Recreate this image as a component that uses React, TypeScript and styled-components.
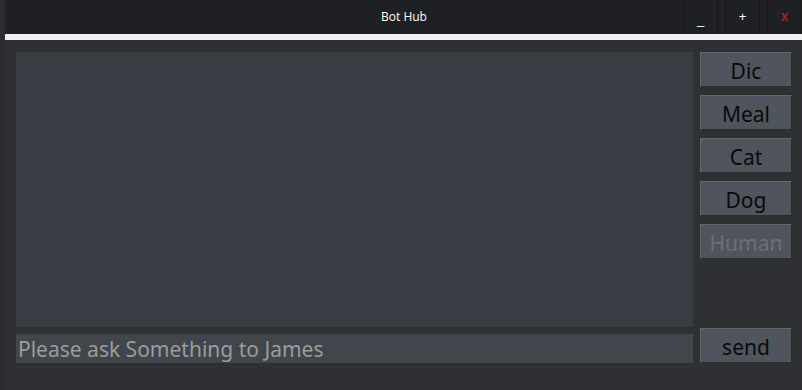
import React from "react";
import styled, { createGlobalStyle } from "styled-components";

const Global = createGlobalStyle`
  html, body { margin: 0; padding: 0; background: #2f3034; }
  body { font-family: "Noto Sans", "Open Sans", sans-serif; }
  * { box-sizing: border-box; }
`;

const Window = styled.div`
  display: flex;
  width: 802px;
  height: 390px;
  background: #2f3034;
  overflow: hidden;
`;

const EdgeStrip = styled.div`
  width: 5px;
  flex: none;
  background: #2b2c2f;
`;

const Main = styled.div`
  flex: 1;
  display: flex;
  flex-direction: column;
`;

const TitleBar = styled.div`
  height: 34px;
  display: flex;
  background: #1f2024;
`;

const Title = styled.div`
  flex: 1;
  padding-left: 120px;
  display: flex;
  align-items: center;
  justify-content: center;
  color: #ffffff;
  font-family: "Open Sans", "Noto Sans", sans-serif;
  font-size: 12px;
  padding-bottom: 1px;
`;

const WinButtons = styled.div`
  display: flex;
  gap: 7px;
  height: 33px;
`;

const WinButton = styled.div<{ $danger?: boolean; $low?: boolean }>`
  width: 35px;
  height: 33px;
  display: flex;
  align-items: ${(p) => (p.$low ? "flex-end" : "center")};
  justify-content: center;
  padding-bottom: ${(p) => (p.$low ? "7px" : "1px")};
  border-left: 1px solid #17181a;
  border-right: 1px solid #17181a;
  color: ${(p) => (p.$danger ? "#d41a1a" : "#ffffff")};
  font-family: "Liberation Sans", sans-serif;
  font-size: ${(p) => (p.$danger ? "14px" : "13px")};
  line-height: 1;
`;

const WhiteStrip = styled.div`
  height: 6px;
  background: #f0f0f0;
`;

const Content = styled.div`
  display: flex;
  gap: 7px;
  padding: 12px 0 0 11px;
`;

const LeftCol = styled.div`
  display: flex;
  flex-direction: column;
  gap: 7px;
  width: 677px;
`;

const ChatArea = styled.div`
  height: 275px;
  background: #393c43;
`;

const Input = styled.input`
  height: 29px;
  border: none;
  outline: none;
  background: #41454c;
  color: #9b9b9b;
  font-family: "Noto Sans", sans-serif;
  font-size: 21px;
  padding: 1px 0 0 2px;
  &::placeholder { color: #9b9b9b; }
`;

const RightCol = styled.div`
  width: 92px;
  height: 311px;
  display: flex;
  flex-direction: column;
  justify-content: space-between;
`;

const ButtonStack = styled.div`
  display: flex;
  flex-direction: column;
  gap: 8px;
`;

const BotButton = styled.button<{ $disabled?: boolean }>`
  height: 35px;
  width: 92px;
  padding: 3px 0 0;
  background: #50545c;
  border: 1px solid #2a2c30;
  border-top-color: #62666e;
  border-left-color: #62666e;
  color: ${(p) => (p.$disabled ? "#6b6f76" : "#0a0a0a")};
  font-family: "Noto Sans", sans-serif;
  font-size: 21px;
  line-height: 1;
  display: flex;
  align-items: center;
  justify-content: center;
`;

const bots = ["Dic", "Meal", "Cat", "Dog"];

export default function App() {
  return (
    <>
      <Global />
      <Window>
        <EdgeStrip />
        <Main>
          <TitleBar>
            <Title>Bot Hub</Title>
            <WinButtons>
              <WinButton $low>_</WinButton>
              <WinButton>+</WinButton>
              <WinButton $danger>x</WinButton>
            </WinButtons>
          </TitleBar>
          <WhiteStrip />
          <Content>
            <LeftCol>
              <ChatArea />
              <Input placeholder="Please ask Something to James" />
            </LeftCol>
            <RightCol>
              <ButtonStack>
                {bots.map((b) => (
                  <BotButton key={b}>{b}</BotButton>
                ))}
                <BotButton $disabled>Human</BotButton>
              </ButtonStack>
              <BotButton>send</BotButton>
            </RightCol>
          </Content>
        </Main>
      </Window>
    </>
  );
}
